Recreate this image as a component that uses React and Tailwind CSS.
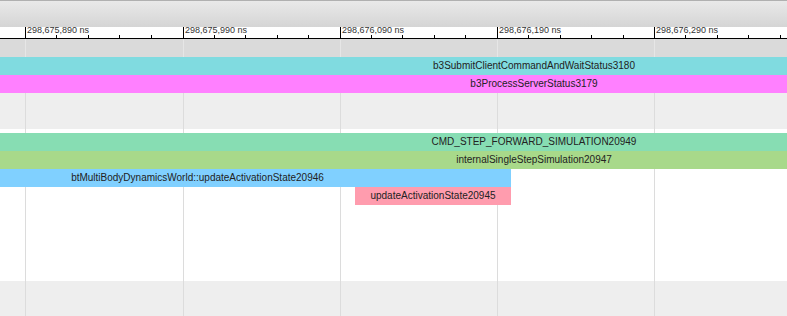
const MAJOR = [
  { x: 25, label: '298,675,890 ns' },
  { x: 182.5, label: '298,675,990 ns' },
  { x: 340, label: '298,676,090 ns' },
  { x: 497, label: '298,676,190 ns' },
  { x: 654, label: '298,676,290 ns' },
];

const STEP = 157.25;

function Ruler() {
  const minors = [];
  for (let i = -1; i < 26; i++) {
    const x = 25 + (i * STEP) / 5;
    if (x < 0 || x > 787 || i % 5 === 0) continue;
    minors.push(Math.round(x));
  }
  return (
    <div className="relative h-[12px] bg-white border-b border-black overflow-hidden">
      {minors.map((x) => (
        <div key={x} className="absolute bottom-0 h-[3px] w-px bg-black" style={{ left: x }} />
      ))}
      {MAJOR.map((m) => (
        <div key={m.label} className="absolute top-0 bottom-0" style={{ left: Math.round(m.x) }}>
          <div className="absolute top-0 bottom-0 left-0 w-px bg-black" />
          <span className="absolute left-[2px] top-[-1px] text-[9px] leading-[9px] text-[#333] whitespace-nowrap">
            {m.label}
          </span>
        </div>
      ))}
    </div>
  );
}

function Bar({ className, children }) {
  return (
    <div
      className={`relative z-10 h-[18px] text-[10px] leading-[18px] text-[#222] text-center whitespace-nowrap overflow-hidden ${className}`}
    >
      {children}
    </div>
  );
}

export default function App() {
  return (
    <div className="w-[787px] h-[316px] overflow-hidden bg-white font-['Liberation_Sans',Arial,sans-serif]">
      {/* toolbar */}
      <div className="h-[27px] border-t border-[#b0b0b0] bg-gradient-to-b from-[#e9e9e9] to-[#d5d5d5]" />

      <Ruler />

      <div className="relative">
        {/* grid lines */}
        {MAJOR.map((m) => (
          <div
            key={m.x}
            className="absolute top-0 bottom-0 w-px bg-[#dcdcdc]"
            style={{ left: Math.round(m.x) }}
          >
            <div className="h-[18px] bg-[#e6e6e6]" />
          </div>
        ))}

        {/* lane 1 */}
        <div className="bg-[#eeeeee]">
          <div className="h-[18px] bg-[#dadada]" />
          <Bar className="w-[1068px] bg-[#80dbe0]">b3SubmitClientCommandAndWaitStatus3180</Bar>
          <Bar className="w-[1068px] bg-[#ff80ff]">b3ProcessServerStatus3179</Bar>
          <div className="h-[36px]" />
        </div>

        {/* lane 2 */}
        <div className="pt-[4px] h-[152px]">
          <Bar className="w-[1068px] bg-[#87ddb3]">CMD_STEP_FORWARD_SIMULATION20949</Bar>
          <Bar className="w-[1068px] bg-[#a8d98a]">internalSingleStepSimulation20947</Bar>
          <Bar className="ml-[-116px] w-[627px] bg-[#80d0ff]">btMultiBodyDynamicsWorld::updateActivationState20946</Bar>
          <Bar className="ml-[355px] w-[156px] bg-[#ff9cae]">updateActivationState20945</Bar>
        </div>

        {/* lane 3 */}
        <div className="h-[40px] bg-[#eeeeee]" />
      </div>
    </div>
  );
}
